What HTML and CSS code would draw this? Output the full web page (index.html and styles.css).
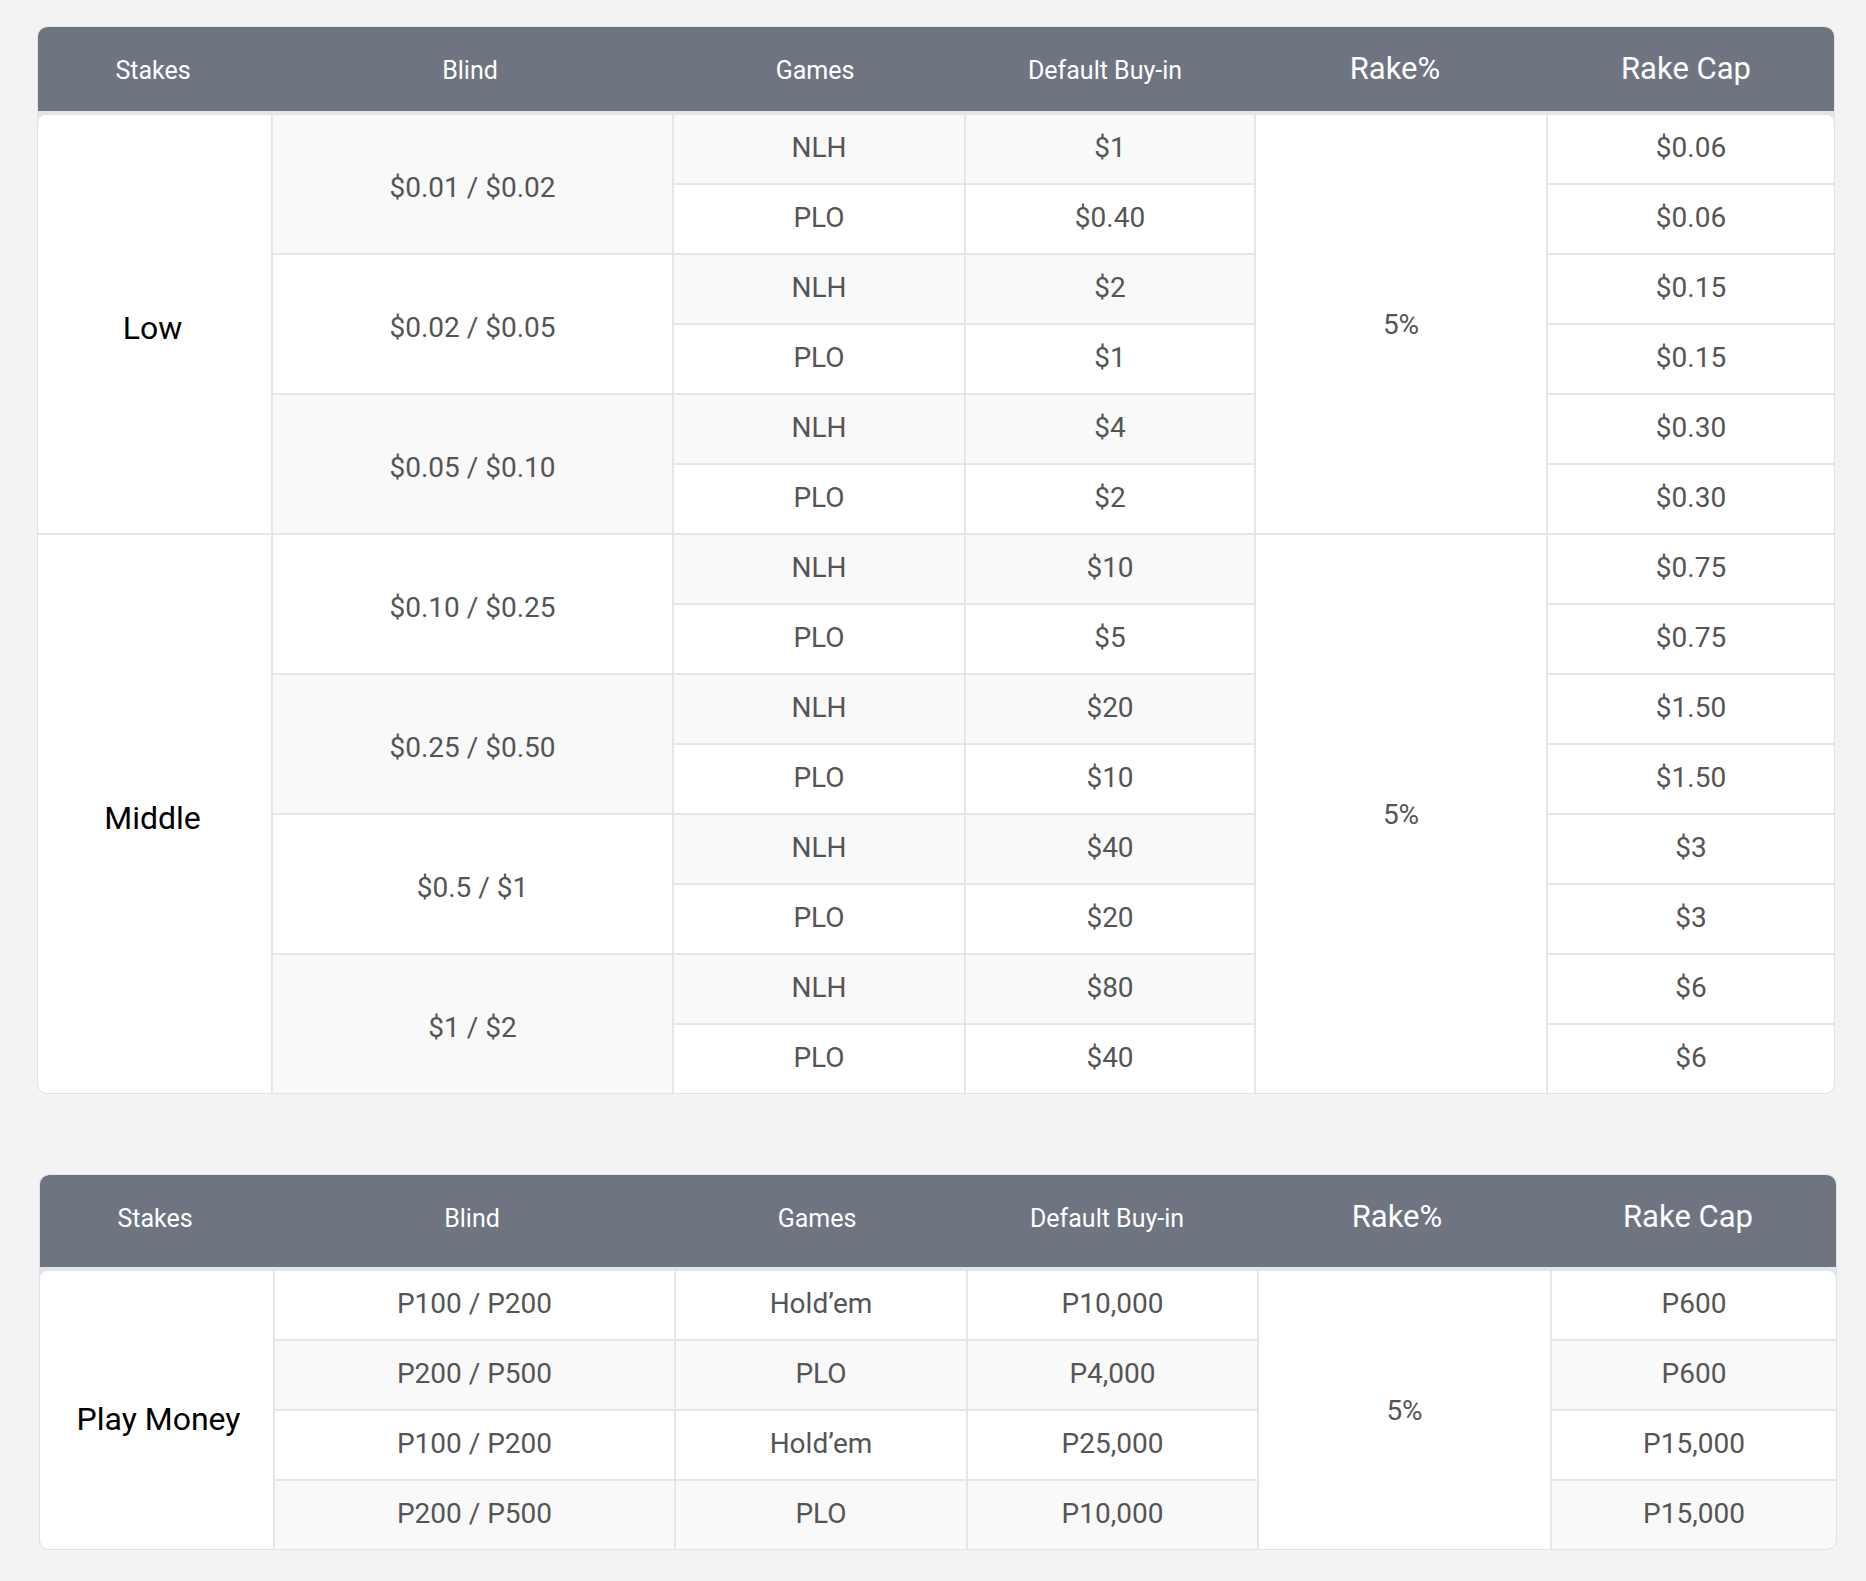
FILE: index.html
```html
<!DOCTYPE html>
<html lang="en">
<head>
<meta charset="utf-8">
<title>Rake Structure</title>
<link rel="stylesheet" href="styles.css">
</head>
<body>
<main class="page">
  <section class="rake-table t1">
    <div class="thead">
      <div class="th">Stakes</div>
      <div class="th">Blind</div>
      <div class="th">Games</div>
      <div class="th">Default Buy-in</div>
      <div class="th th-lg">Rake%</div>
      <div class="th th-lg">Rake Cap</div>
    </div>
    <div class="tbody">
      <div class="td stake span6">Low</div>
      <div class="td g blind span2">$0.01 / $0.02</div>
      <div class="td g">NLH</div>
      <div class="td g">$1</div>
      <div class="td rake span6">5%</div>
      <div class="td">$0.06</div>

      <div class="td">PLO</div>
      <div class="td">$0.40</div>
      <div class="td">$0.06</div>

      <div class="td blind span2">$0.02 / $0.05</div>
      <div class="td g">NLH</div>
      <div class="td g">$2</div>
      <div class="td">$0.15</div>

      <div class="td">PLO</div>
      <div class="td">$1</div>
      <div class="td">$0.15</div>

      <div class="td g blind span2">$0.05 / $0.10</div>
      <div class="td g">NLH</div>
      <div class="td g">$4</div>
      <div class="td">$0.30</div>

      <div class="td">PLO</div>
      <div class="td">$2</div>
      <div class="td">$0.30</div>

      <div class="td stake span8">Middle</div>
      <div class="td blind span2">$0.10 / $0.25</div>
      <div class="td g">NLH</div>
      <div class="td g">$10</div>
      <div class="td rake span8">5%</div>
      <div class="td">$0.75</div>

      <div class="td">PLO</div>
      <div class="td">$5</div>
      <div class="td">$0.75</div>

      <div class="td g blind span2">$0.25 / $0.50</div>
      <div class="td g">NLH</div>
      <div class="td g">$20</div>
      <div class="td">$1.50</div>

      <div class="td">PLO</div>
      <div class="td">$10</div>
      <div class="td">$1.50</div>

      <div class="td blind span2">$0.5 / $1</div>
      <div class="td g">NLH</div>
      <div class="td g">$40</div>
      <div class="td">$3</div>

      <div class="td">PLO</div>
      <div class="td">$20</div>
      <div class="td">$3</div>

      <div class="td g blind span2">$1 / $2</div>
      <div class="td g">NLH</div>
      <div class="td g">$80</div>
      <div class="td">$6</div>

      <div class="td">PLO</div>
      <div class="td">$40</div>
      <div class="td">$6</div>
    </div>
  </section>

  <section class="rake-table t2">
    <div class="thead">
      <div class="th">Stakes</div>
      <div class="th">Blind</div>
      <div class="th">Games</div>
      <div class="th">Default Buy-in</div>
      <div class="th th-lg">Rake%</div>
      <div class="th th-lg">Rake Cap</div>
    </div>
    <div class="tbody">
      <div class="td stake stake-pm span4">Play Money</div>
      <div class="td">P100 / P200</div>
      <div class="td">Hold’em</div>
      <div class="td">P10,000</div>
      <div class="td rake span4">5%</div>
      <div class="td">P600</div>

      <div class="td g">P200 / P500</div>
      <div class="td g">PLO</div>
      <div class="td g">P4,000</div>
      <div class="td g">P600</div>

      <div class="td">P100 / P200</div>
      <div class="td">Hold’em</div>
      <div class="td">P25,000</div>
      <div class="td">P15,000</div>

      <div class="td g">P200 / P500</div>
      <div class="td g">PLO</div>
      <div class="td g">P10,000</div>
      <div class="td g">P15,000</div>
    </div>
  </section>
</main>
</body>
</html>
```

FILE: styles.css
```css
* {
  box-sizing: border-box;
}

body {
  margin: 0;
  background: #f3f3f3;
  font-family: Roboto, "Liberation Sans", Arial, sans-serif;
}

.page {
  display: flex;
  flex-direction: column;
  align-items: flex-start;
  padding: 26px 0 30px 37px;
}

.rake-table {
  width: 1798px;
  border: 1px solid #e1e4e6;
  border-radius: 10px;
  background: #e4e7e9;
  overflow: hidden;
}

.t2 {
  margin-top: 80px;
  margin-left: 2px;
}

.thead {
  display: grid;
  grid-template-columns: 230px 404px 286px 294px 286px 1fr;
  align-items: baseline;
  height: 84px;
  padding-top: 23px;
  margin-bottom: 4px;
  background: #6e7580;
  color: #ffffff;
  border-radius: 9px 9px 0 0;
}

.t2 .thead {
  height: 92px;
}

.th {
  text-align: center;
  font-size: 25px;
  line-height: normal;
}

.th-lg {
  font-size: 31px;
}

.tbody {
  display: grid;
  grid-auto-rows: 68px;
  gap: 2px;
  background: #e6e6e6;
  border-radius: 8px;
  overflow: hidden;
}

.t1 .tbody {
  grid-template-columns: 233px 399px 290px 288px 290px 1fr;
}

.t2 .tbody {
  grid-template-columns: 233px 399px 290px 289px 291px 1fr;
}

.td {
  display: flex;
  align-items: center;
  justify-content: center;
  padding-bottom: 4px;
  background: #ffffff;
  color: #555555;
  font-size: 28px;
}

.td.g {
  background: #f9f9f9;
}

.blind {
  padding: 7px 0 0;
}

.rake {
  padding: 0;
}

.stake {
  padding: 8px 4px 0 0;
  color: #000000;
  font-size: 32px;
}

.stake-pm {
  padding: 18px 0 0 4px;
}

.span2 { grid-row: span 2; }
.span4 { grid-row: span 4; }
.span6 { grid-row: span 6; }
.span8 { grid-row: span 8; }
```
